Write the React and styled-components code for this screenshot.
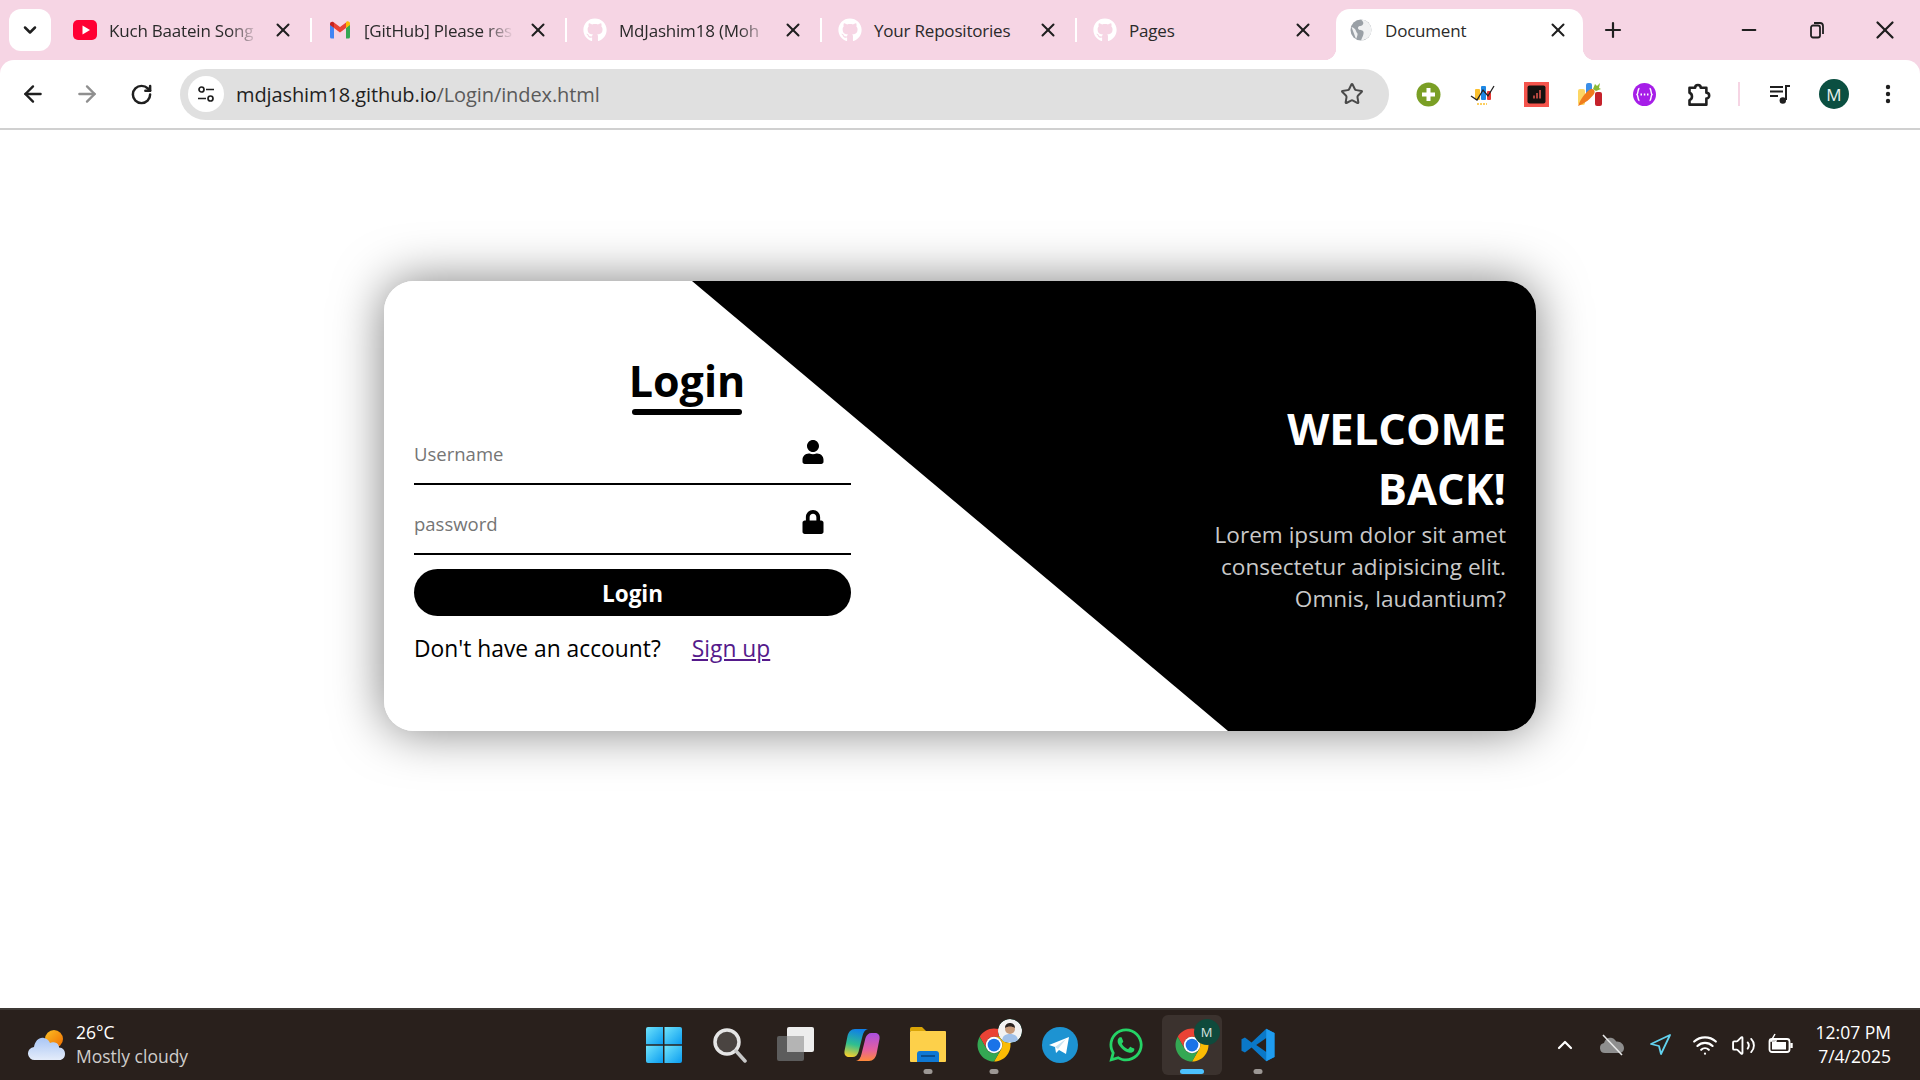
import React from "react";
import styled, { createGlobalStyle } from "styled-components";
import {
  ArrowLeft,
  ArrowRight,
  ChevronDown,
  ChevronUp,
  Minus,
  Navigation,
  Plus,
  RotateCw,
  Star,
  Volume2,
  Wifi,
  X,
} from "lucide-react";
import { FaGithub, FaLock, FaUser, FaWhatsapp } from "react-icons/fa";

const GlobalStyle = createGlobalStyle`
  * {
    box-sizing: border-box;
  }
  html,
  body {
    margin: 0;
    height: 100%;
    overflow: hidden;
  }
  body {
    font-family: "Open Sans", "Noto Sans", sans-serif;
    background: #fff;
  }
`;

/* favicons */
const YoutubeIcon = () => (
  <svg width="24" height="24" viewBox="0 0 24 24">
    <rect x="0" y="2" width="24" height="20" rx="5" fill="#ff0033" />
    <path d="M9.5 7.5v9l7.5-4.5z" fill="#fff" />
  </svg>
);

const GmailIcon = () => (
  <svg width="24" height="24" viewBox="0 0 24 24">
    <path d="M2 6v13a1.5 1.5 0 0 0 1.5 1.5H6V10z" fill="#4285f4" />
    <path d="M18 10v10.5h2.5A1.5 1.5 0 0 0 22 19V6z" fill="#34a853" />
    <path d="M6 10l6 4.5 6-4.5V4.5L12 9 6 4.5z" fill="#ea4335" />
    <path d="M18 4.5V10l4-3V5.5c0-1.8-2.1-2.9-3.6-1.8z" fill="#fbbc04" />
    <path d="M2 7l4 3V4.5l-.4-.3C4.1 3 2 4.1 2 5.9z" fill="#c5221f" />
  </svg>
);

const GlobeIcon = () => (
  <svg width="24" height="24" viewBox="0 0 24 24">
    <circle cx="12" cy="12" r="10.5" fill="#9aa0a6" />
    <path
      d="M12 1.5c2.5 2 3 4 1.5 5.5S9 7.5 9 10s3.5 1.5 5 3 0 5-2 9.5c5-.2 10.5-4.500 10.500-10.500S17 1.500 12 1.500zM2.500 9c2 .500 4 2 4.500 4s2 2 1.500 4-1 3-1.500 4"
      fill="#fff"
      opacity="0.85"
    />
  </svg>
);

const SiteTuneIcon = () => (
  <svg width="20" height="20" viewBox="0 0 20 20" fill="none" stroke="#1f1f1f" strokeWidth="1.7">
    <circle cx="5.500" cy="5.500" r="2.500" />
    <path d="M10 5.500h8M2 14.500h8" />
    <circle cx="14.500" cy="14.500" r="2.500" />
  </svg>
);

/* extension icons */
const AddExtIcon = () => (
  <svg width="25" height="25" viewBox="0 0 25 25">
    <circle cx="12.500" cy="12.500" r="12" fill="#7a9f25" />
    <path d="M12.500 6v13M6 12.500h13" stroke="#fff" strokeWidth="4" />
  </svg>
);

const ChartExtIcon = () => (
  <svg width="26" height="26" viewBox="0 0 26 26">
    <rect x="6" y="8" width="5" height="11" rx="1" fill="#fbc02d" />
    <rect x="12" y="5" width="5" height="14" rx="1" fill="#1e88e5" />
    <rect x="18" y="10" width="4" height="9" rx="1" fill="#e53935" />
    <path d="M2 15l6 4 6-10 5 6 6-10" fill="none" stroke="#222" strokeWidth="1.300" />
    <path d="M8 23h10" stroke="#fbc02d" strokeWidth="1.500" strokeDasharray="2 1" />
  </svg>
);

const RedExtIcon = () => (
  <svg width="25" height="25" viewBox="0 0 25 25">
    <rect width="25" height="25" fill="#f4544c" />
    <rect x="3.500" y="3.500" width="18" height="18" rx="2" fill="#16110f" />
    <path d="M9 13.500h2v3H9zM12 11h2v5.500h-2zM15 8h2v8.500h-2z" fill="#b5473f" />
  </svg>
);

const CarrotExtIcon = () => (
  <svg width="26" height="26" viewBox="0 0 26 26">
    <rect x="1" y="8" width="7" height="16" rx="2" fill="#fdd663" />
    <rect x="9" y="2" width="6" height="12" rx="2" fill="#3b8ee8" />
    <rect x="18" y="11" width="7" height="14" rx="2" fill="#c5222b" />
    <path d="M1 25c2-6 8-15 13-17 3-.500 4 1.500 3.500 4C15 17 7 23 1 25z" fill="#f07c1d" />
    <path d="M16 8l2-5 2 2 3-3-1 5 2 1-5 2z" fill="#8ab934" />
  </svg>
);

const PurpleExtIcon = () => (
  <svg width="23" height="23" viewBox="0 0 23 23" fill="none" stroke="#fff" strokeWidth="1.400">
    <circle cx="11.500" cy="11.500" r="11.500" fill="#a61ee8" stroke="none" />
    <path d="M6.500 5.500c-2 0-1 4.500-2.500 6 1.500 1.500 .5 6 2.500 6M16.500 5.500c2 0 1 4.500 2.500 6-1.500 1.500-.5 6-2.500 6" />
    <path d="M7.500 11.500h1.500M10.800 11.500h1.500M14 11.500h1.500" strokeWidth="1.800" />
  </svg>
);

const PuzzleIcon = () => (
  <svg width="27" height="27" viewBox="0 0 24 24" fill="none" stroke="#1f1f1f" strokeWidth="2.300" strokeLinejoin="round">
    <path d="M4 6h5a2.500 2.500 0 0 1 5 0h5v4.500a2.500 2.500 0 0 1 0 5V21H4v-4a3.500 3.500 0 0 0 0-6.500z" />
  </svg>
);

const MediaIcon = () => (
  <svg width="24" height="24" viewBox="0 0 24 24" fill="none" stroke="#1f1f1f" strokeWidth="2">
    <path d="M2 5h13M2 9.500h13M2 14h8" />
    <path d="M18 18V4h4" />
    <circle cx="14.800" cy="18.500" r="3.200" fill="#1f1f1f" stroke="none" />
  </svg>
);

const DotsIcon = () => (
  <svg width="6" height="20" viewBox="0 0 6 20" fill="#1f1f1f">
    <circle cx="3" cy="3" r="2.200" />
    <circle cx="3" cy="10" r="2.200" />
    <circle cx="3" cy="17" r="2.200" />
  </svg>
);

const RestoreIcon = () => (
  <svg width="16" height="18" viewBox="0 0 16 18" fill="none" stroke="#1f1f1f" strokeWidth="1.800">
    <rect x="2" y="4.500" width="9" height="12" rx="2" />
    <path d="M5 2h6a3 3 0 0 1 3 3v8" />
  </svg>
);

/* taskbar icons */
const WeatherIcon = () => (
  <svg width="38" height="32" viewBox="0 0 38 32">
    <defs>
      <linearGradient id="sunFill" x1="0" y1="0" x2="1" y2="1">
        <stop offset="0" stopColor="#fbbf24" />
        <stop offset="1" stopColor="#ef6c00" />
      </linearGradient>
      <linearGradient id="cloudFill" x1="0" y1="0" x2="0" y2="1">
        <stop offset="0" stopColor="#a9c6f5" />
        <stop offset="1" stopColor="#e4ecfa" />
      </linearGradient>
    </defs>
    <circle cx="26" cy="10" r="9" fill="url(#sunFill)" />
    <path
      d="M7 31a6.500 6.500 0 0 1-1-13c1-6 5-10 10-9 3 .5 5 2.500 6 5 1.500-1 3-1 5-.5 3 .5 4 3 4 5 4 0 6 3 6 6.500 0 3.500-2.500 6-5.500 6z"
      fill="url(#cloudFill)"
    />
  </svg>
);

const WindowsIcon = () => (
  <svg width="36" height="36" viewBox="0 0 36 36">
    <defs>
      <linearGradient id="winFill" x1="0" y1="0" x2="1" y2="1">
        <stop offset="0" stopColor="#6fe3fb" />
        <stop offset="1" stopColor="#0a9cf0" />
      </linearGradient>
    </defs>
    <path d="M2 0h15v17.300H0V2a2 2 0 0 1 2-2z" fill="url(#winFill)" />
    <path d="M18.500 0H34a2 2 0 0 1 2 2v15.300H18.500z" fill="url(#winFill)" />
    <path d="M0 18.800h17V36H2a2 2 0 0 1-2-2z" fill="url(#winFill)" />
    <path d="M18.500 18.800H36V34a2 2 0 0 1-2 2H18.500z" fill="url(#winFill)" />
  </svg>
);

const SearchIcon = () => (
  <svg width="36" height="36" viewBox="0 0 36 36" fill="none">
    <circle cx="15" cy="15" r="12" fill="#4a4441" stroke="#e6e6e6" strokeWidth="3.500" />
    <path d="M24 24l9 10" stroke="#c8c8c8" strokeWidth="3.500" strokeLinecap="round" />
  </svg>
);

const TaskViewIcon = () => (
  <svg width="38" height="36" viewBox="0 0 38 36">
    <rect x="10" y="0" width="27" height="25" rx="2" fill="#ededed" />
    <rect x="0" y="9" width="27" height="25" rx="2" fill="#5c5c5c" />
    <rect x="10" y="9" width="17" height="16" fill="#b4b4b4" />
  </svg>
);

const CopilotIcon = () => (
  <svg width="36" height="36" viewBox="0 0 36 36">
    <defs>
      <linearGradient id="copLeft" x1="0.500" y1="0" x2="0.300" y2="1">
        <stop offset="0" stopColor="#0f7fe8" />
        <stop offset="0.550" stopColor="#2fbf8f" />
        <stop offset="1" stopColor="#f5cf2e" />
      </linearGradient>
      <linearGradient id="copRight" x1="0.500" y1="0" x2="0.500" y2="1">
        <stop offset="0" stopColor="#a94fe0" />
        <stop offset="0.600" stopColor="#e5609e" />
        <stop offset="1" stopColor="#ff8a3a" />
      </linearGradient>
    </defs>
    <path d="M11 2h13c-3 .5-4.500 3-5.500 7l-4 16c-1 3-3 5-6 5H5c-3.500 0-5-2.500-4.500-6l3-15C4.500 5 7 2 11 2z" fill="url(#copLeft)" />
    <path d="M25 34H12c3-.5 4.500-3 5.500-7l4-16c1-3 3-5 6-5h3.500c3.500 0 5 2.500 4.500 6l-3 15C31.500 31 29 34 25 34z" fill="url(#copRight)" />
  </svg>
);

const FolderIcon = () => (
  <svg width="36" height="36" viewBox="0 0 36 36">
    <path d="M0 2a2 2 0 0 1 2-2h10l4 4h-16z" fill="#d9a406" />
    <rect x="0" y="4" width="36" height="31" rx="1" fill="#fdd04a" />
    <path d="M7 35V27a3 3 0 0 1 3-3h16a3 3 0 0 1 3 3v8z" fill="#0f78d4" />
    <rect x="11" y="28" width="14" height="2" fill="#0a4f8f" />
  </svg>
);

const ChromeLogo = () => (
  <svg width="36" height="36" viewBox="0 0 48 48">
    <path d="M4.950 13A22 22 0 0 1 43.050 13H24A11 11 0 0 0 14.470 29.500Z" fill="#ea4335" />
    <path d="M43.050 13A22 22 0 0 1 24 46L33.530 29.500A11 11 0 0 0 24 13Z" fill="#fbbc04" />
    <path d="M24 46A22 22 0 0 1 4.950 13L14.470 29.500A11 11 0 0 0 33.530 29.500Z" fill="#34a853" />
    <circle cx="24" cy="24" r="11" fill="#fff" />
    <circle cx="24" cy="24" r="8.500" fill="#1a73e8" />
  </svg>
);

const PhotoAvatar = () => (
  <svg width="24" height="24" viewBox="0 0 24 24">
    <circle cx="12" cy="12" r="12" fill="#f2f2f2" />
    <path d="M4 23c0-6 3-8 8-8s8 2 8 8z" fill="#9fc0e8" />
    <circle cx="12" cy="10" r="5" fill="#c69a7a" />
    <path d="M7 9c0-4 3-5 5-5s5 1 5 5c-3-2-7-2-10 0z" fill="#2b2320" />
  </svg>
);

const TelegramIcon = () => (
  <svg width="36" height="36" viewBox="0 0 36 36">
    <circle cx="18" cy="18" r="18" fill="#1d93d2" />
    <path d="M7 18l20-8-3 17-7-4-3 3-1-6z" fill="#fff" />
    <path d="M13 20l11-8-8 10z" fill="#c8e3f2" />
  </svg>
);

const VscodeIcon = () => (
  <svg width="36" height="36" viewBox="0 0 24 24">
    <path d="M17.500 1.200L7.700 10.300 3.300 7 1 8.200v7.600L3.300 17l4.400-3.300 9.800 9.100L23 20V4zM17.500 7.300L10.800 12l6.700 4.700z" fill="#0a78c8" fillRule="evenodd" />
    <path d="M17.500 1.200L23 4v16l-5.500 2.800z" fill="#1f9cf0" />
  </svg>
);

const CloudOffIcon = () => (
  <svg width="26" height="24" viewBox="0 0 26 24">
    <path d="M6 20a5 5 0 0 1-1-9.900C6 6 9.500 4 13 5c2 .5 3.500 2 4.200 3.500C21 8 25 11 25 15s-3 5-5 5z" fill="#8e8e8e" />
    <path d="M4 2l19 20" stroke="#e8e8e8" strokeWidth="1.600" />
  </svg>
);

const BatteryIcon = () => (
  <svg width="26" height="24" viewBox="0 0 26 24" fill="none" stroke="#fff" strokeWidth="1.800">
    <rect x="1.500" y="6" width="20" height="13" rx="2.500" />
    <rect x="4" y="9" width="14" height="7.500" fill="#fff" stroke="none" />
    <path d="M23.500 10v5" strokeWidth="2.400" />
    <path d="M7 1L3 8h5l-3 6" strokeWidth="1.500" />
  </svg>
);

/* browser chrome */
const Screen = styled.div`
  width: 100vw;
  height: 100vh;
  display: flex;
  flex-direction: column;
  background: #fff;
`;

const BrowserTop = styled.header`
  background: #f6d5e4;
  display: flex;
  flex-direction: column;
`;

const TabStrip = styled.div`
  height: 60px;
  display: flex;
  align-items: flex-end;
  padding-left: 9px;
`;

const TabListButton = styled.button`
  width: 42px;
  height: 42px;
  margin: 0 6px 9px 0;
  padding: 0;
  border: 0;
  border-radius: 12px;
  background: #fff;
  display: flex;
  align-items: center;
  justify-content: center;
  color: #1f1f1f;
`;

const Tab = styled.div`
  position: relative;
  width: ${(p) => (p.$active ? "247px" : "255px")};
  height: 51px;
  margin-left: ${(p) => (p.$active ? "4px" : "0")};
  padding: ${(p) => (p.$active ? "0 14px 0 13px" : "0 18px 0 16px")};
  display: flex;
  align-items: center;
  gap: 12px;
  background: ${(p) => (p.$active ? "#fff" : "transparent")};
  border-radius: 14px 14px 0 0;
  padding-bottom: 9px;

  &::after {
    content: "";
    display: ${(p) => (p.$divider ? "block" : "none")};
    position: absolute;
    right: 0;
    top: 9px;
    width: 2px;
    height: 24px;
    background: #fff;
  }
`;

const TabCorner = styled.span`
  position: absolute;
  bottom: 0;
  width: 12px;
  height: 12px;
  ${(p) => (p.$side === "left" ? "left: -12px;" : "right: -12px;")}
  background: radial-gradient(
    circle at ${(p) => (p.$side === "left" ? "0 0" : "100% 0")},
    transparent 12px,
    #fff 12.5px
  );
`;

const Favicon = styled.span`
  width: 24px;
  height: 24px;
  flex: none;
  display: flex;
  align-items: center;
  justify-content: center;
  color: #fff;
`;

const TabLabel = styled.span`
  flex: 1;
  min-width: 0;
  white-space: nowrap;
  font-size: 17px;
  color: #2a2a2a;
  letter-spacing: -0.2px;
  ${(p) =>
    p.$fade &&
    "mask-image: linear-gradient(to right, #000 120px, transparent 150px);"}
`;

const TabClose = styled.span`
  width: 22px;
  height: 22px;
  flex: none;
  display: flex;
  color: #1f1f1f;
`;

const NewTab = styled.span`
  width: 44px;
  height: 51px;
  margin-left: 8px;
  padding-bottom: 9px;
  display: flex;
  align-items: center;
  justify-content: center;
  color: #1f1f1f;
`;

const WindowControls = styled.div`
  margin-left: auto;
  height: 60px;
  padding-right: 1px;
  display: flex;
`;

const WindowButton = styled.span`
  width: 68px;
  display: flex;
  align-items: center;
  justify-content: center;
  color: #1f1f1f;
`;

const Toolbar = styled.div`
  height: 70px;
  padding-left: 6px;
  background: #fff;
  border-radius: 14px 14px 0 0;
  border-bottom: 2px solid #d0d0d0;
  display: flex;
  align-items: center;
`;

const NavButton = styled.span`
  width: 54px;
  flex: none;
  display: flex;
  align-items: center;
  justify-content: center;
  color: ${(p) => (p.$disabled ? "#8f8f8f" : "#1f1f1f")};
`;

const Omnibox = styled.div`
  width: 1209px;
  height: 51px;
  margin: 0 12px;
  padding: 0 25px 0 8px;
  border-radius: 26px;
  background: #e0e0e0;
  display: flex;
  align-items: center;
  gap: 12px;
`;

const SiteBadge = styled.span`
  width: 36px;
  height: 36px;
  border-radius: 50%;
  background: #fff;
  display: flex;
  align-items: center;
  justify-content: center;
`;

const Address = styled.span`
  flex: 1;
  font-size: 20px;
  letter-spacing: -0.1px;
  color: #1f1f1f;
  em {
    font-style: normal;
    color: #5a5a5a;
  }
`;

const ToolbarDivider = styled.span`
  width: 2px;
  height: 24px;
  margin: 0 13px;
  background: #f6d5e4;
`;

const Avatar = styled.span`
  width: 30px;
  height: 30px;
  border-radius: 50%;
  background: #0b4f41;
  color: #e8f1ee;
  font-size: 17px;
  display: flex;
  align-items: center;
  justify-content: center;
`;

/* login card */
const Page = styled.main`
  flex: 1;
  padding-top: 151px;
  display: flex;
  justify-content: center;
  align-items: flex-start;
`;

const Card = styled.section`
  position: relative;
  width: 1152px;
  height: 450px;
  border-radius: 30px;
  overflow: hidden;
  background: #fff;
  display: flex;
  justify-content: space-between;
  align-items: center;
`;

const CardShadow = styled.div`
  border-radius: 30px;
  box-shadow: 0 0 50px rgba(0, 0, 0, 0.5);
`;

const Diagonal = styled.span`
  position: absolute;
  inset: 0;
  background: #000;
  clip-path: polygon(308px 0, 100% 0, 100% 100%, 844px 100%);
`;

const FormPanel = styled.form`
  position: relative;
  width: 606px;
  align-self: flex-start;
  padding-top: 75px;
`;

const FormTitle = styled.h2`
  position: relative;
  margin: 0;
  height: 59px;
  text-align: center;
  font-size: 43px;
  line-height: 50px;
  font-weight: 700;
  color: #000;

  &::after {
    content: "";
    position: absolute;
    left: 248px;
    bottom: 0;
    width: 110px;
    height: 6px;
    border-radius: 3px;
    background: #000;
  }
`;

const FormBody = styled.div`
  width: 437px;
  margin-left: 30px;
`;

const Field = styled.label`
  height: 70px;
  padding-top: 25px;
  padding-right: 26px;
  border-bottom: 2px solid #000;
  display: flex;
  align-items: flex-start;
  justify-content: space-between;
  font-size: 24px;
  color: #000;
`;

const Input = styled.input`
  flex: 1;
  min-width: 0;
  height: 28px;
  margin: -1px 0 0;
  padding: 0;
  border: 0;
  outline: 0;
  background: transparent;
  font: 18.5px "Open Sans", sans-serif;
  &::placeholder {
    color: #757575;
    opacity: 1;
  }
`;

const SubmitButton = styled.button`
  width: 100%;
  height: 47px;
  margin-top: 14px;
  padding: 2px 0 0;
  border: 0;
  border-radius: 24px;
  background: #000;
  color: #fff;
  font: 700 22.500px "Open Sans", sans-serif;
`;

const SignupRow = styled.p`
  margin: 15px 0 0;
  display: flex;
  gap: 31px;
  font-size: 22.800px;
  line-height: 36px;
  color: #000;

  a {
    color: #551a8b;
  }
`;

const Welcome = styled.div`
  position: relative;
  width: 340px;
  padding: 2px 30px 0 0;
  text-align: right;
`;

const WelcomeTitle = styled.h1`
  margin: 0;
  font-size: 43.500px;
  line-height: 60px;
  font-weight: 700;
  color: #fff;
`;

const WelcomeText = styled.p`
  margin: 0;
  font-size: 22.600px;
  line-height: 32px;
  color: #c9c9c9;
`;

/* taskbar */
const Taskbar = styled.footer`
  height: 72px;
  background: #29201c;
  border-top: 2px solid #3d3935;
  display: grid;
  grid-template-columns: 1fr auto 1fr;
  align-items: center;
`;

const WeatherWidget = styled.div`
  padding-left: 28px;
  display: flex;
  align-items: center;
  gap: 10px;
`;

const WeatherText = styled.div`
  margin-top: -2px;
  font-size: 17.500px;
  line-height: 24px;
  color: #fff;
  small {
    display: block;
    font-size: inherit;
    color: #cfcdcb;
  }
`;

const Dock = styled.div`
  margin-left: 1px;
  display: flex;
  gap: 6px;
`;

const DockItem = styled.span`
  position: relative;
  width: 60px;
  height: 60px;
  border-radius: 6px;
  display: flex;
  align-items: center;
  justify-content: center;
  background: ${(p) => (p.$active ? "#3b322e" : "transparent")};

  &::after {
    content: "";
    display: ${(p) => (p.$running || p.$active ? "block" : "none")};
    position: absolute;
    left: 50%;
    bottom: 1px;
    width: ${(p) => (p.$active ? "24px" : "9px")};
    height: 5px;
    transform: translateX(-50%);
    border-radius: 3px;
    background: ${(p) => (p.$active ? "#4cc2ff" : "#9c9794")};
  }
`;

const ProfileBadge = styled.span`
  position: absolute;
  top: 4px;
  right: 2px;
  width: ${(p) => (p.$small ? "24px" : "26px")};
  height: ${(p) => (p.$small ? "24px" : "26px")};
  border-radius: 50%;
  overflow: hidden;
  display: flex;
  align-items: center;
  justify-content: center;
  background: #0f4a3c;
  color: #d7e4e0;
  font-size: 13px;
`;

const Tray = styled.div`
  display: flex;
  align-items: center;
  justify-content: flex-end;
  padding-right: 29px;
`;

const TrayItem = styled.span`
  width: ${(p) => p.$width}px;
  flex: none;
  display: flex;
  align-items: center;
  justify-content: center;
  color: #fff;
`;

const Clock = styled.div`
  margin-left: 16px;
  margin-top: -2px;
  text-align: right;
  font-size: 17.500px;
  line-height: 24px;
  color: #fff;
`;

const tabs = [
  { icon: <YoutubeIcon />, title: "Kuch Baatein Song", divider: true, fade: true },
  { icon: <GmailIcon />, title: "[GitHub] Please res", divider: true, fade: true },
  { icon: <FaGithub size={24} />, title: "MdJashim18 (Moh", divider: true, fade: true },
  { icon: <FaGithub size={24} />, title: "Your Repositories", divider: true },
  { icon: <FaGithub size={24} />, title: "Pages" },
];

const extensions = [
  <AddExtIcon key="add" />,
  <ChartExtIcon key="chart" />,
  <RedExtIcon key="red" />,
  <CarrotExtIcon key="carrot" />,
  <PurpleExtIcon key="purple" />,
  <PuzzleIcon key="puzzle" />,
];

const App = () => {
  return (
    <Screen>
      <GlobalStyle />
      <BrowserTop>
        <TabStrip>
          <TabListButton type="button" aria-label="tabs">
            <ChevronDown size={20} strokeWidth={3} />
          </TabListButton>
          {tabs.map((tab) => (
            <Tab key={tab.title} $divider={tab.divider}>
              <Favicon>{tab.icon}</Favicon>
              <TabLabel $fade={tab.fade}>{tab.title}</TabLabel>
              <TabClose>
                <X size={22} strokeWidth={2.2} />
              </TabClose>
            </Tab>
          ))}
          <Tab $active>
            <TabCorner $side="left" />
            <Favicon>
              <GlobeIcon />
            </Favicon>
            <TabLabel>Document</TabLabel>
            <TabClose>
              <X size={22} strokeWidth={2.2} />
            </TabClose>
            <TabCorner $side="right" />
          </Tab>
          <NewTab>
            <Plus size={24} strokeWidth={2.2} />
          </NewTab>
          <WindowControls>
            <WindowButton>
              <Minus size={22} strokeWidth={2} />
            </WindowButton>
            <WindowButton>
              <RestoreIcon />
            </WindowButton>
            <WindowButton>
              <X size={30} strokeWidth={1.8} />
            </WindowButton>
          </WindowControls>
        </TabStrip>
        <Toolbar>
          <NavButton>
            <ArrowLeft size={26} strokeWidth={2.2} />
          </NavButton>
          <NavButton $disabled>
            <ArrowRight size={26} strokeWidth={2.2} />
          </NavButton>
          <NavButton>
            <RotateCw size={23} strokeWidth={2.6} />
          </NavButton>
          <Omnibox>
            <SiteBadge>
              <SiteTuneIcon />
            </SiteBadge>
            <Address>
              mdjashim18.github.io<em>/Login/index.html</em>
            </Address>
            <Star size={24} strokeWidth={2} color="#4a4a4a" />
          </Omnibox>
          {extensions.map((icon) => (
            <NavButton key={icon.key}>{icon}</NavButton>
          ))}
          <ToolbarDivider />
          <NavButton>
            <MediaIcon />
          </NavButton>
          <NavButton>
            <Avatar>M</Avatar>
          </NavButton>
          <NavButton>
            <DotsIcon />
          </NavButton>
        </Toolbar>
      </BrowserTop>

      <Page>
        <CardShadow>
          <Card>
            <Diagonal />
            <FormPanel>
              <FormTitle>Login</FormTitle>
              <FormBody>
                <Field>
                  <Input type="text" placeholder="Username" />
                  <FaUser />
                </Field>
                <Field>
                  <Input type="password" placeholder="password" />
                  <FaLock />
                </Field>
                <SubmitButton type="button">Login</SubmitButton>
                <SignupRow>
                  Don't have an account?
                  <a href="#signup">Sign up</a>
                </SignupRow>
              </FormBody>
            </FormPanel>
            <Welcome>
              <WelcomeTitle>WELCOME BACK!</WelcomeTitle>
              <WelcomeText>
                Lorem ipsum dolor sit amet consectetur adipisicing elit. Omnis,
                laudantium?
              </WelcomeText>
            </Welcome>
          </Card>
        </CardShadow>
      </Page>

      <Taskbar>
        <WeatherWidget>
          <WeatherIcon />
          <WeatherText>
            26°C
            <small>Mostly cloudy</small>
          </WeatherText>
        </WeatherWidget>
        <Dock>
          <DockItem>
            <WindowsIcon />
          </DockItem>
          <DockItem>
            <SearchIcon />
          </DockItem>
          <DockItem>
            <TaskViewIcon />
          </DockItem>
          <DockItem>
            <CopilotIcon />
          </DockItem>
          <DockItem $running>
            <FolderIcon />
          </DockItem>
          <DockItem $running>
            <ChromeLogo />
            <ProfileBadge $small>
              <PhotoAvatar />
            </ProfileBadge>
          </DockItem>
          <DockItem>
            <TelegramIcon />
          </DockItem>
          <DockItem>
            <FaWhatsapp size={38} color="#25d366" />
          </DockItem>
          <DockItem $active>
            <ChromeLogo />
            <ProfileBadge>M</ProfileBadge>
          </DockItem>
          <DockItem $running>
            <VscodeIcon />
          </DockItem>
        </Dock>
        <Tray>
          <TrayItem $width={48}>
            <ChevronUp size={24} strokeWidth={2.2} />
          </TrayItem>
          <TrayItem $width={47}>
            <CloudOffIcon />
          </TrayItem>
          <TrayItem $width={48}>
            <Navigation size={24} strokeWidth={1.8} color="#62d2ef" />
          </TrayItem>
          <TrayItem $width={42}>
            <Wifi size={26} strokeWidth={2} />
          </TrayItem>
          <TrayItem $width={36}>
            <Volume2 size={25} strokeWidth={1.8} />
          </TrayItem>
          <TrayItem $width={38}>
            <BatteryIcon />
          </TrayItem>
          <Clock>
            12:07 PM
            <br />
            7/4/2025
          </Clock>
        </Tray>
      </Taskbar>
    </Screen>
  );
};

export default App;
